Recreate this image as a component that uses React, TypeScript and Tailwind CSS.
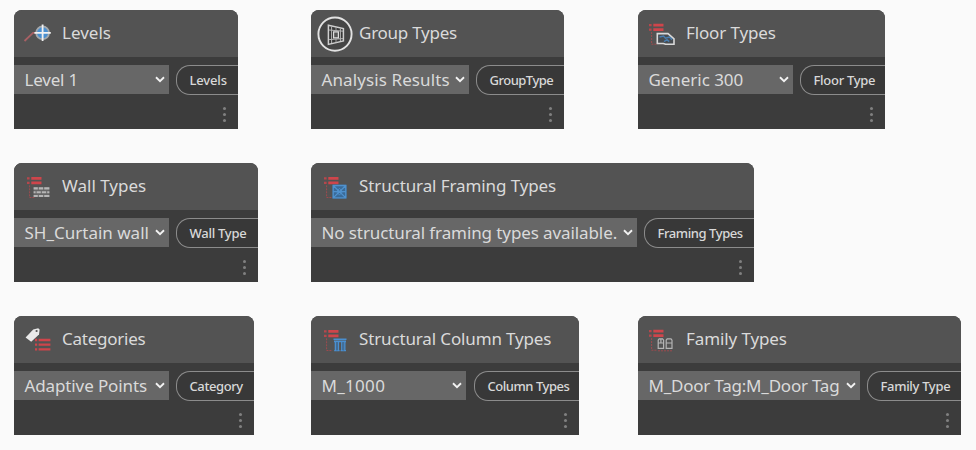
import type { ReactNode } from "react";

const RED = "#cf454b";
const BLUE = "#4a8fd0";

/** Red tree outline shared by the "types" icons. */
function Tree({ x = 13, y = 14.3 }: { x?: number; y?: number }) {
  return (
    <g>
      <path d={`M${x} ${y + 1.1}h2.6M${x} ${y + 5.6}h2.6`} stroke={RED} strokeWidth="2.2" opacity="0.8" />
      <path d={`M${x + 4.3} ${y + 1.1}h10.2M${x + 4.3} ${y + 5.6}h10.2`} stroke={RED} strokeWidth="2.7" />
      <path d={`M${x + 2.6} ${y + 8}v12.2h5`} fill="none" stroke={RED} strokeWidth="1" strokeDasharray="2 1" opacity="0.6" />
    </g>
  );
}

function Icon({ children }: { children: ReactNode }) {
  return (
    <svg className="h-[47px] w-[48px] shrink-0" viewBox="0 0 48 47" fill="none">
      {children}
    </svg>
  );
}

const LevelsIcon = (
  <Icon>
    <path d="M10.5 31 19 22.8h3" stroke="#a86064" strokeWidth="1.8" />
    <circle cx="28.6" cy="22.8" r="6.4" fill={BLUE} stroke="#a4a8ac" strokeWidth="1.8" />
    <path d="M28.6 14.6v16.4M20.4 22.8h16.4" stroke="#f2f2f2" strokeWidth="1.8" />
  </Icon>
);

const GroupIcon = (
  <Icon>
    <circle cx="24" cy="24.1" r="16.6" fill="#454545" stroke="#e2e2e2" strokeWidth="1.9" />
    <path d="M17.4 15.2 32.4 18.6v12.4L17.4 34.4z" fill="#383838" stroke="#cfcfcf" strokeWidth="1.5" />
    <path d="M20.6 16.5v16.5M29.4 18.5v12.5M18 20l14 1.2M18 29.6l14-1" stroke="#b5b5b5" strokeWidth="1" />
    <path d="M22.6 21.8h4.8v6h-4.8z" fill="#555" stroke="#dedede" strokeWidth="1.2" />
    <path d="M25 17v4M25 29v3.5" stroke="#aaa" strokeWidth="0.9" />
  </Icon>
);

const FloorIcon = (
  <Icon>
    <Tree x={11} y={14} />
    <path d="M19.3 23.6h10.7l6 5.2v5.5h-8.4l-2.2-.8h-6.1z" fill="#484c50" stroke="#d9d9d9" strokeWidth="1.6" />
    <path d="m21.5 27 4-1 2 2.2 4-1.2 2.6 2.6M26 31.6l3-2 2.2 2" stroke={BLUE} strokeWidth="1.5" opacity="0.75" />
  </Icon>
);

const WallIcon = (
  <Icon>
    <Tree />
    <path d="M19.6 24.3h15.8v9.8H19.6z" fill="#666" />
    <path d="M19.6 25.4h4.2m1 0h4.4m1 0h5.2M19.6 29.2h2m1 0h4.2m1 0h4.4m1 0h2.2M19.6 33h4.2m1 0h4.4m1 0h5.2" stroke="#b5b5b5" strokeWidth="2.1" />
  </Icon>
);

const FramingIcon = (
  <Icon>
    <Tree />
    <path d="M21.5 21.8h14v13.8h-14z" fill="#3a6b99" />
    <path d="M22.2 22.5h12.6v12.4H22.2zM22.2 28.7h12.6M22.2 22.5l12.6 12.4M34.8 22.5 22.2 34.9" stroke="#4f91cd" strokeWidth="1.3" />
    <path d="m28.5 25.3 3 3.4-3 3.4-3-3.4z" stroke="#4f91cd" strokeWidth="0.8" />
  </Icon>
);

const ColumnIcon = (
  <Icon>
    <Tree />
    <path d="M22.5 23.2h13M23 25.4h12" stroke={BLUE} strokeWidth="1.6" />
    <path d="M24.4 26v8.5M27.4 26v8.5M30.8 26v8.5M33.8 26v8.5M23.2 34.6h5.4M29.6 34.6h5.4" stroke={BLUE} strokeWidth="1.4" />
    <path d="M25.9 26v8.5M32.3 26v8.5" stroke="#3f6f9c" strokeWidth="1.6" />
  </Icon>
);

const CategoryIcon = (
  <Icon>
    <path d="m11.6 21.6 7.6-8.2 5-1.2 1.4 1.2-.6 5-7.8 7.4z" fill="#e9e9e9" />
    <circle cx="22.6" cy="15" r="1.1" fill="#535353" />
    <path d="M21 24h2.2M21 28.6h2.2M21 33.4h2.2M24.6 24h11.8M24.6 28.6h11.8M24.6 33.4h11.8" stroke={RED} strokeWidth="2.3" />
  </Icon>
);

const FamilyIcon = (
  <Icon>
    <Tree x={11} y={14} />
    <path d="M20 34.8h15" stroke={RED} strokeWidth="1" strokeDasharray="2 1" opacity="0.6" />
    <path d="M20.2 24.2l1-1.4h3.4l1 1.4v8.2h-5.4zM28.2 24.2l1-1.4h3.8l1 1.4v8.2h-5.8zM20.2 27h5.4M28.2 27H34M22.9 23v4" stroke="#b4b4b4" strokeWidth="1.2" />
  </Icon>
);

type NodeProps = {
  icon: ReactNode;
  title: string;
  titleClass: string;
  value: string;
  valueClass: string;
  port: string;
  portClass: string;
  cardClass: string;
  selectClass: string;
  gapClass: string;
};

const nodes: NodeProps[] = [
  { icon: LevelsIcon, title: "Levels", titleClass: "tracking-[0px]", value: "Level 1", valueClass: "tracking-[-0.2px]", port: "Levels", portClass: "tracking-[-0.15px]", cardClass: "w-[224px]", selectClass: "w-[155px]", gapClass: "ml-[7px]" },
  { icon: GroupIcon, title: "Group Types", titleClass: "tracking-[-0.25px]", value: "Analysis Results", valueClass: "tracking-[0.1px]", port: "GroupType", portClass: "tracking-[-0.5px]", cardClass: "w-[253px]", selectClass: "w-[158px]", gapClass: "ml-[7px]" },
  { icon: FloorIcon, title: "Floor Types", titleClass: "tracking-[-0.13px]", value: "Generic 300", valueClass: "tracking-[-0.05px]", port: "Floor Type", portClass: "tracking-[-0.28px]", cardClass: "w-[247px]", selectClass: "w-[155px]", gapClass: "ml-[7px]" },
  { icon: WallIcon, title: "Wall Types", titleClass: "tracking-[0px]", value: "SH_Curtain wall", valueClass: "tracking-[0px]", port: "Wall Type", portClass: "tracking-[-0.25px]", cardClass: "w-[244px]", selectClass: "w-[155px]", gapClass: "ml-[7px]" },
  { icon: FramingIcon, title: "Structural Framing Types", titleClass: "tracking-[-0.1px]", value: "No structural framing types available.", valueClass: "tracking-[-0.1px]", port: "Framing Types", portClass: "tracking-[-0.42px]", cardClass: "w-[443px]", selectClass: "w-[326px]", gapClass: "ml-[7px]" },
  { icon: CategoryIcon, title: "Categories", titleClass: "tracking-[-0.25px]", value: "Adaptive Points", valueClass: "tracking-[-0.12px]", port: "Category", portClass: "tracking-[-0.4px]", cardClass: "w-[240px]", selectClass: "w-[155px]", gapClass: "ml-[7px]" },
  { icon: ColumnIcon, title: "Structural Column Types", titleClass: "tracking-[-0.14px]", value: "M_1000", valueClass: "tracking-[0.3px]", port: "Column Types", portClass: "tracking-[-0.47px]", cardClass: "w-[268px]", selectClass: "w-[155px]", gapClass: "ml-[8px]" },
  { icon: FamilyIcon, title: "Family Types", titleClass: "tracking-[-0.1px]", value: "M_Door Tag:M_Door Tag", valueClass: "tracking-[-0.22px]", port: "Family Type", portClass: "tracking-[-0.32px]", cardClass: "w-[323px]", selectClass: "w-[222px]", gapClass: "ml-[7px]" },
];

function NodeCard({ n }: { n: NodeProps }) {
  return (
    <section className={`h-[119px] overflow-hidden rounded-t-[8px] bg-[#3c3c3c] ${n.cardClass}`}>
      <header className="flex h-[47px] items-center bg-[#535353]">
        {n.icon}
        <h2 className={`pb-[2px] text-[17px] leading-6 whitespace-nowrap text-[#dadada] ${n.titleClass}`}>{n.title}</h2>
      </header>
      <div className="flex h-[45px] items-center">
        <div className={`flex h-[29px] shrink-0 items-center justify-between bg-[#676767] pr-[4px] pl-[10.5px] ${n.selectClass}`}>
          <span className={`text-[17px] leading-6 whitespace-nowrap text-[#dadada] ${n.valueClass}`}>{n.value}</span>
          <svg className="h-[7px] w-[10px] shrink-0" viewBox="0 0 10 7" fill="none">
            <path d="m1 1.3 4 3.8 4-3.8" stroke="#f2f2f2" strokeWidth="1.9" />
          </svg>
        </div>
        <div className={`flex h-[30px] flex-1 items-center rounded-l-[14px] border border-r-0 border-[#8c8c8c] bg-[#383838] pl-[12.5px] ${n.gapClass}`}>
          <span className={`text-[13px] leading-5 font-medium whitespace-nowrap text-[#d8d8d8] ${n.portClass}`}>{n.port}</span>
        </div>
      </div>
      <div className="flex flex-col items-end gap-[3px] pt-[5px] pr-[12.5px]">
        <i className="h-[3px] w-[3px] rounded-full bg-[#808080]" />
        <i className="h-[3px] w-[3px] rounded-full bg-[#808080]" />
        <i className="h-[3px] w-[3px] rounded-full bg-[#808080]" />
      </div>
    </section>
  );
}

export default function App() {
  return (
    <main className="h-[450px] w-[976px] overflow-hidden bg-[#fafafa] pt-[10px] pl-[14px] font-['Noto_Sans',sans-serif]">
      <div className="grid grid-cols-[297px_327px_338px] grid-rows-[153px_153px_119px]">
        {nodes.map((n, i) => (
          <div key={n.title} className={i === 4 ? "col-span-2" : ""}>
            <NodeCard n={n} />
          </div>
        ))}
      </div>
    </main>
  );
}
